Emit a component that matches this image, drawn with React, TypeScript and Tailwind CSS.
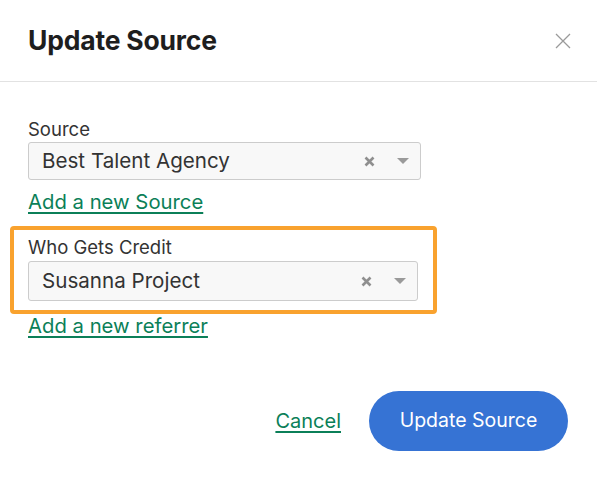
import React from "react";

function SelectBox({ value, cls }: { value: string; cls: string }) {
  return (
    <div
      className={`flex items-center rounded-[3px] border border-[#cccccc] bg-[#f8f8f8] pl-[13px] pr-[11px] ${cls}`}
    >
      <span className="flex-1 text-[20.6px] text-[#333333]">{value}</span>
      <svg width="11" height="11" viewBox="0 0 11 11" className="mr-[22px]">
        <path d="M1.5 1.5 L9.5 9.5 M9.5 1.5 L1.5 9.5" stroke="#8f8f8f" strokeWidth="2.6" />
      </svg>
      <svg width="12" height="8" viewBox="0 0 12 8">
        <path d="M0 1 L12 1 L6 7 Z" fill="#9a9a9a" />
      </svg>
    </div>
  );
}

export default function App() {
  return (
    <div
      className="h-[481px] w-[597px] bg-white text-[#222]"
      style={{ fontFamily: "Inter, 'Noto Sans', sans-serif" }}
    >
      <div className="flex h-[82px] items-center justify-between border-b border-[#e2e2e2] pl-[28px] pr-[26px]">
        <h1 className="text-[26.5px] font-bold tracking-[-0.2px] text-[#1e1e1e]">Update Source</h1>
        <svg width="16" height="16" viewBox="0 0 16 16">
          <path d="M1 1 L15 15 M15 1 L1 15" stroke="#9a9a9a" strokeWidth="1.3" />
        </svg>
      </div>

      <div className="pt-[34px]">
        <div className="pl-[28px]">
          <div className="text-[18.5px] leading-[26px] text-[#333]">Source</div>
          <SelectBox value="Best Talent Agency" cls="h-[38px] w-[393px]" />
          <a className="mt-[10px] inline-block text-[20.3px] leading-[24px] text-[#0b7f58] underline decoration-2 underline-offset-[3px]">
            Add a new Source
          </a>
        </div>

        <div className="mt-[11px] ml-[10px] w-[427px] rounded-[4px] border-[4px] border-[#f9a22e] pl-[14px] pt-[4px] pb-[9px]">
          <div className="text-[18.5px] leading-[26px] text-[#333]">Who Gets Credit</div>
          <div className="mt-[1px]">
            <SelectBox value="Susanna Project" cls="h-[40px] w-[390px]" />
          </div>
        </div>
        <div className="pl-[28px]">
          <a className="inline-block text-[20.3px] leading-[24px] text-[#0b7f58] underline decoration-2 underline-offset-[3px]">
            Add a new referrer
          </a>
        </div>
      </div>

      <div className="mt-[52px] flex items-center justify-end gap-[28px] pr-[29px]">
        <a className="text-[20px] text-[#0b7f58] underline decoration-2 underline-offset-[3px]">
          Cancel
        </a>
        <button className="h-[60px] w-[199px] rounded-full bg-[#3673d4] text-[19.5px] text-white">
          Update Source
        </button>
      </div>
    </div>
  );
}
